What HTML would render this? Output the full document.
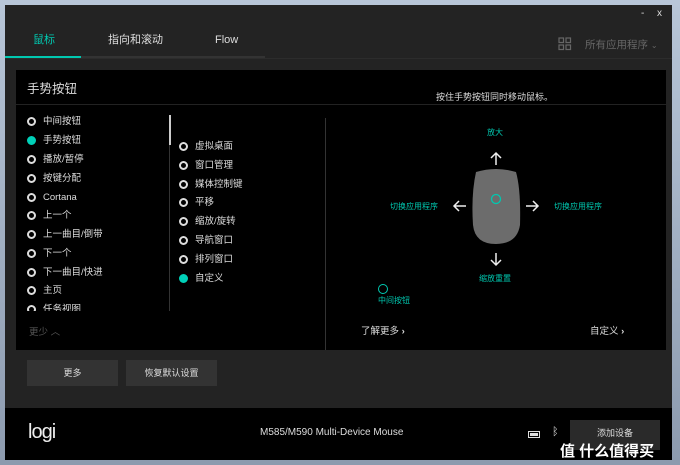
<!DOCTYPE html>
<html><head><meta charset="utf-8"><style>
*{margin:0;padding:0;box-sizing:border-box}
body{width:680px;height:465px;overflow:hidden;background:linear-gradient(180deg,#b8c6d8,#8c9aae);font-family:"Liberation Sans","Noto Sans CJK SC",sans-serif;position:relative}
.win{position:absolute;left:5px;top:5px;width:667px;height:455px;background:#232323}
.a{position:absolute;white-space:nowrap}
.t{font-size:11px;color:#ddd;line-height:14px}
.teal{color:#00c8b0}
.c{position:absolute;width:9px;height:9px;border:2px solid #ddd;border-radius:50%}
.c.f{background:#00d0b8;border-color:#00d0b8}
.li{font-size:9.5px;color:#ddd;line-height:14px;height:14px}
.g{font-size:8px;color:#00c8b0}
</style></head><body>
<div class="win"></div>
<div class="a" style="left:641px;top:8px;color:#ddd;font-size:10px">-</div>
<div class="a" style="left:657px;top:8px;color:#ddd;font-size:10px">x</div>
<div class="a t teal" style="left:33px;top:33px">鼠标</div>
<div class="a t" style="left:108px;top:33px">指向和滚动</div>
<div class="a t" style="left:215px;top:33px">Flow</div>
<div class="a" style="left:5px;top:56px;width:260px;height:2px;background:#333"></div>
<div class="a" style="left:5px;top:56px;width:76px;height:3px;background:#00c8b0"></div>
<div class="a" style="left:5px;top:58px;width:667px;height:1px;background:#2c2c2c"></div>
<div class="a" style="left:558px;top:37px;width:14px;height:14px;border:none">
<svg width="14" height="14"><g fill="none" stroke="#666" stroke-width="1.2"><rect x="1" y="1" width="4.5" height="4.5"/><rect x="8" y="1" width="4.5" height="4.5"/><rect x="1" y="8" width="4.5" height="4.5"/><rect x="8" y="8" width="4.5" height="4.5"/></g></svg></div>
<div class="a" style="left:585px;top:37px;font-size:10.5px;color:#666">所有应用程序 <span style="font-size:8px">⌄</span></div>
<div class="a" style="left:16px;top:70px;width:650px;height:280px;background:#000"></div>
<div class="a" style="left:16px;top:104px;width:650px;height:1px;background:#222"></div>
<div class="a" style="left:27px;top:78px;font-size:12.5px;color:#ddd">手势按钮</div>
<div class="a" style="left:436px;top:90px;font-size:9px;color:#ddd">按住手势按钮同时移动鼠标。</div>
<div class="a" style="left:169px;top:115px;width:1px;height:196px;background:#333"></div>
<div class="a" style="left:169px;top:115px;width:2px;height:30px;background:#ccc"></div>
<div class="a" style="left:325px;top:118px;width:1px;height:232px;background:#333"></div>
<div style="position:absolute;left:0;top:0;width:160px;height:311px;overflow:hidden">
<div class="c" style="left:27px;top:117px"></div><div class="a li" style="left:43px;top:115px">中间按钮</div>
<div class="c f" style="left:27px;top:136px"></div><div class="a li teal" style="left:43px;top:134px">手势按钮</div>
<div class="c" style="left:27px;top:155px"></div><div class="a li" style="left:43px;top:153px">播放/暂停</div>
<div class="c" style="left:27px;top:174px"></div><div class="a li" style="left:43px;top:172px">按键分配</div>
<div class="c" style="left:27px;top:193px"></div><div class="a li" style="left:43px;top:191px">Cortana</div>
<div class="c" style="left:27px;top:211px"></div><div class="a li" style="left:43px;top:209px">上一个</div>
<div class="c" style="left:27px;top:230px"></div><div class="a li" style="left:43px;top:228px">上一曲目/倒带</div>
<div class="c" style="left:27px;top:249px"></div><div class="a li" style="left:43px;top:247px">下一个</div>
<div class="c" style="left:27px;top:268px"></div><div class="a li" style="left:43px;top:266px">下一曲目/快进</div>
<div class="c" style="left:27px;top:286px"></div><div class="a li" style="left:43px;top:284px">主页</div>
<div class="c" style="left:27px;top:305px"></div><div class="a li" style="left:43px;top:303px">任务视图</div>
</div>
<div class="a" style="left:29px;top:324px;font-size:9.5px;color:#555">更少 ︿</div>
<div class="c" style="left:179px;top:142px"></div><div class="a li" style="left:195px;top:140px">虚拟桌面</div>
<div class="c" style="left:179px;top:161px"></div><div class="a li" style="left:195px;top:159px">窗口管理</div>
<div class="c" style="left:179px;top:180px"></div><div class="a li" style="left:195px;top:178px">媒体控制键</div>
<div class="c" style="left:179px;top:198px"></div><div class="a li" style="left:195px;top:196px">平移</div>
<div class="c" style="left:179px;top:217px"></div><div class="a li" style="left:195px;top:215px">缩放/旋转</div>
<div class="c" style="left:179px;top:236px"></div><div class="a li" style="left:195px;top:234px">导航窗口</div>
<div class="c" style="left:179px;top:255px"></div><div class="a li" style="left:195px;top:253px">排列窗口</div>
<div class="c f" style="left:179px;top:274px"></div><div class="a li teal" style="left:195px;top:272px">自定义</div>
<svg class="a" style="left:440px;top:140px" width="110" height="130">
<path d="M36 32 Q56 26 76 32 Q81 50 80 85 Q77 104 56 104 Q35 104 33 85 Q31 55 36 32Z" fill="#6c6c6c"/>
<circle cx="56" cy="59" r="4.5" fill="none" stroke="#00c8b0" stroke-width="1.3"/>
<g stroke="#eee" stroke-width="1.5" fill="none"><path d="M56 25V13M51 18L56 13L61 18"/><path d="M56 113V125M51 120L56 125L61 120"/><path d="M26 66H14M19 61L14 66L19 71"/><path d="M86 66H98M93 61L98 66L93 71"/></g>
</svg>
<div class="a g" style="left:487px;top:127px">放大</div>
<div class="a g" style="left:479px;top:273px">缩放重置</div>
<div class="a g" style="left:390px;top:201px">切换应用程序</div>
<div class="a g" style="left:554px;top:201px">切换应用程序</div>
<div class="a" style="left:378px;top:284px;width:10px;height:10px;border:1.5px solid #00c8b0;border-radius:50%"></div>
<div class="a g" style="left:378px;top:295px">中间按钮</div>
<div class="a" style="left:361px;top:323px;font-size:9.5px;color:#ddd">了解更多 <b>›</b></div>
<div class="a" style="left:590px;top:323px;font-size:9.5px;color:#ddd">自定义 <b>›</b></div>
<div class="a" style="left:27px;top:360px;width:91px;height:26px;background:#333;color:#ddd;font-size:9px;text-align:center;line-height:26px">更多</div>
<div class="a" style="left:126px;top:360px;width:91px;height:26px;background:#333;color:#ddd;font-size:9px;text-align:center;line-height:26px">恢复默认设置</div>
<div class="a" style="left:5px;top:408px;width:667px;height:52px;background:#000"></div>
<div class="a" style="left:28px;top:421px;font-size:20px;color:#eee;letter-spacing:-1px">logi</div>
<div class="a" style="left:260px;top:427px;font-size:10px;color:#ddd">M585/M590 Multi-Device Mouse</div>
<div class="a" style="left:528px;top:431px;width:12px;height:7px;border:1.5px solid #ddd;background:#ddd;box-shadow:inset 0 0 0 1px #000"></div>
<div class="a" style="left:552px;top:426px;font-size:11px;color:#ddd">ᛒ</div>
<div class="a" style="left:570px;top:420px;width:90px;height:30px;background:#2a2a2a;color:#ddd;font-size:9px;text-align:center;line-height:26px">添加设备</div>
<div class="a" style="left:560px;top:440px;font-size:15px;color:#fff;font-weight:bold">值 什么值得买</div>
</body></html>
